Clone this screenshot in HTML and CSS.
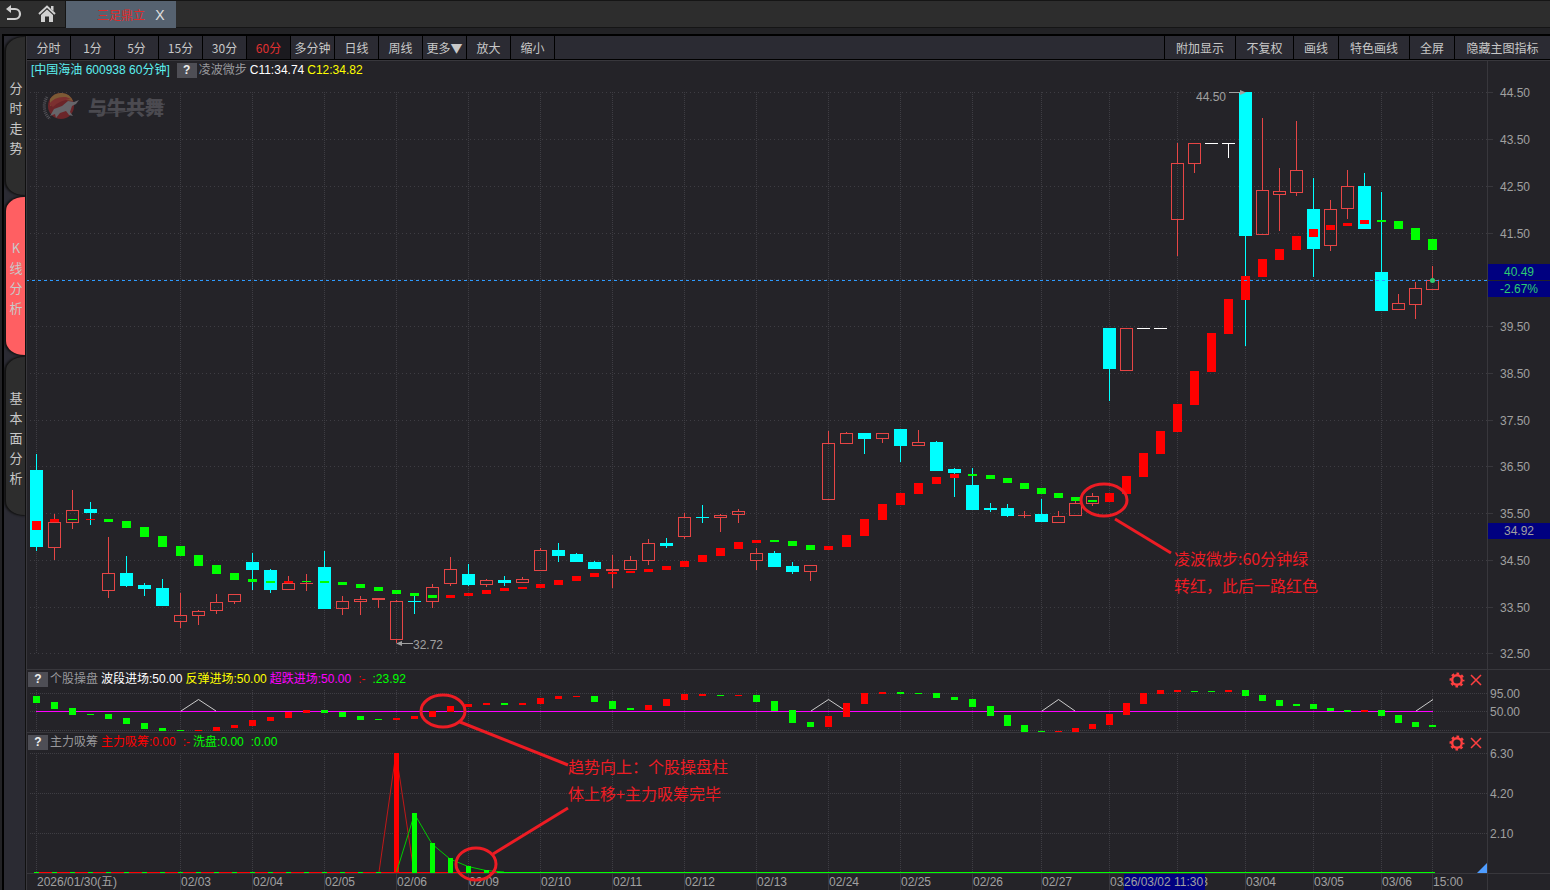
FILE: index.html
```html
<!DOCTYPE html>
<html lang="zh-CN">
<head>
    <meta charset="UTF-8">
    <meta name="viewport" content="width=device-width, initial-scale=1.0">
    <title>中国海油 600938 60分钟</title>
    <link rel="stylesheet" href="styles.css">
</head>
<body>
    <header class="topbar">
        <button class="top-icon" aria-label="返回">
            <svg width="16" height="18" viewBox="0 0 16 18"><path d="M3 4H9A4.500 4.500 0 0 1 9 14H1" fill="none" stroke="#d0d0d0" stroke-width="2.200"/><path d="M0 4L5 0V8Z" fill="#d0d0d0"/></svg>
        </button>
        <button class="top-icon" aria-label="首页">
            <svg width="18" height="18" viewBox="0 0 18 18"><path d="M1 9L9 1.500L17 9" fill="none" stroke="#d0d0d0" stroke-width="2"/><path d="M13 1H15.500V6L13 4Z" fill="#d0d0d0"/><path d="M3 10L9 4.500L15 10V17H11V11.500H7V17H3Z" fill="#d0d0d0"/></svg>
        </button>
        <div class="page-tab">
            <span class="page-name">三足鼎立</span>
            <button class="page-close" aria-label="关闭">X</button>
        </div>
    </header>

    <div class="frame">
        <nav class="sidebar">
            <button class="side-tab"><span>分时走势</span></button>
            <button class="side-tab active"><span>K线分析</span></button>
            <button class="side-tab"><span>基本面分析</span></button>
        </nav>

        <main class="content">
            <div class="toolbar">
                <div class="periods">
                    <button>分时</button>
                    <button>1分</button>
                    <button>5分</button>
                    <button>15分</button>
                    <button>30分</button>
                    <button class="active">60分</button>
                    <button>多分钟</button>
                    <button>日线</button>
                    <button>周线</button>
                    <button>更多▼</button>
                    <button>放大</button>
                    <button>缩小</button>
                </div>
                <div class="tools">
                    <button class="four">附加显示</button>
                    <button class="three">不复权</button>
                    <button class="two">画线</button>
                    <button class="four">特色画线</button>
                    <button class="two">全屏</button>
                    <button class="six">隐藏主图指标</button>
                </div>
            </div>

            <div class="charts">
                <section class="panel">
                    <svg id="kline" class="plot" viewBox="27 61 1523 608"></svg>
                    <div class="legend main-legend">
                        <span class="stock">[中国海油 600938 60分钟]</span>
                        <button class="help">?</button>
                        <span class="muted">凌波微步</span>
                        <span class="white">C11:34.74</span>
                        <span class="yellow">C12:34.82</span>
                    </div>
                </section>

                <section class="panel">
                    <svg id="osc" class="plot" viewBox="27 670 1523 62"></svg>
                    <div class="legend">
                        <button class="help">?</button>
                        <span class="muted">个股操盘</span>
                        <span class="white">波段进场:50.00</span>
                        <span class="yellow">反弹进场:50.00</span>
                        <span class="magenta">超跌进场:50.00</span>
                        <span class="red spaced">:-</span>
                        <span class="green spaced">:23.92</span>
                    </div>
                    <div class="panel-actions">
                        <button aria-label="设置"><svg width="16" height="16" viewBox="-8 -8 16 16"><use href="#gear"/></svg></button>
                        <button aria-label="关闭"><svg width="16" height="16" viewBox="-8 -8 16 16"><use href="#cross"/></svg></button>
                    </div>
                </section>

                <section class="panel">
                    <svg id="force" class="plot" viewBox="27 733 1523 140"></svg>
                    <div class="legend">
                        <button class="help">?</button>
                        <span class="muted">主力吸筹</span>
                        <span class="red">主力吸筹:0.00</span>
                        <span class="red spaced">:-</span>
                        <span class="green">洗盘:0.00</span>
                        <span class="green spaced">:0.00</span>
                    </div>
                    <div class="panel-actions">
                        <button aria-label="设置"><svg width="16" height="16" viewBox="-8 -8 16 16"><use href="#gear"/></svg></button>
                        <button aria-label="关闭"><svg width="16" height="16" viewBox="-8 -8 16 16"><use href="#cross"/></svg></button>
                    </div>
                </section>

                <section class="panel">
                    <svg id="dates" class="plot" viewBox="27 874 1523 16"></svg>
                </section>

                <!-- hand drawn notes over all panels -->
                <svg class="notes" viewBox="27 61 1523 829">
                    <defs>
                        <g id="gear" fill="none" stroke="#ff4040">
                            <circle r="4.800" stroke-width="2.400"/>
                            <circle r="6.400" stroke-width="2.200" stroke-dasharray="2.600 2.426" stroke-dashoffset="1.300"/>
                        </g>
                        <path id="cross" d="M-5 -5L5 5M5 -5L-5 5" fill="none" stroke="#ff4040" stroke-width="1.500"/>
                    </defs>
                    <g class="watermark">
                        <circle cx="61" cy="106" r="13" fill="#6b2529"/>
                        <path d="M50 99A13 13 0 0 1 73 101L60 99L50 106Z" fill="#7d5a35"/>
                        <path d="M49 104Q55 96 66 97L71 99Q60 100 53 107Z" fill="#7c3030"/>
                        <path d="M50 116L54 109L62 106L68 101L74 102L79 100L76 104L72 106L70 112L73 116L69 115L66 111L60 113L56 118L55 114Z" fill="#66656a"/>
                        <path d="M47 97A17 17 0 0 0 50 119" fill="none" stroke="#55545a" stroke-width="3" stroke-dasharray="1 1"/>
                        <text x="88" y="115">与牛共舞</text>
                        <path d="M98 113Q125 114 165 104" fill="none" stroke="#4b4a50"/>
                    </g>
                    <g class="pen">
                        <ellipse cx="1104" cy="500" rx="23" ry="16"/>
                        <path d="M1115 519L1171 553"/>
                        <ellipse cx="443" cy="711" rx="22" ry="16"/>
                        <path d="M460 722L568 765"/>
                        <ellipse cx="476" cy="864" rx="20" ry="16"/>
                        <path d="M493 854L568 808"/>
                    </g>
                    <g class="pen-text">
                        <text x="1174" y="565">凌波微步:60分钟绿</text>
                        <text x="1174" y="592">转红，此后一路红色</text>
                        <text x="568" y="773">趋势向上：个股操盘柱</text>
                        <text x="568" y="800">体上移+主力吸筹完毕</text>
                    </g>
                </svg>
            </div>
        </main>
    </div>

    <script src="chart.js"></script>
</body>
</html>
```
FILE: styles.css
```css
* {
    box-sizing: border-box;
}
body {
    margin: 0;
    background: #222225;
    color: #c8c8c8;
    font-family: "Liberation Sans", "Noto Sans CJK SC", sans-serif;
    font-size: 12px;
}
button {
    margin: 0;
    padding: 0;
    border: none;
    background: none;
    color: inherit;
    font: inherit;
    cursor: pointer;
}
svg {
    display: block;
}

/* top bar */
.topbar {
    display: flex;
    height: 28px;
    background: #2d2d2d;
    border-top: 1px solid #151515;
    border-bottom: 1px solid #151515;
}
.top-icon {
    display: flex;
    align-items: center;
    justify-content: center;
    width: 28px;
}
.top-icon + .top-icon {
    width: 38px;
    border-right: 1px solid #151515;
}
.page-tab {
    display: flex;
    align-items: center;
    justify-content: flex-end;
    gap: 8px;
    width: 110px;
    height: 27px;
    padding-right: 9px;
    background: #566270;
}
.page-name {
    color: #e02a2a;
}
.page-close {
    width: 14px;
    color: #e0e0e0;
    font-size: 14px;
}

/* frame */
.frame {
    display: flex;
    margin: 6px 0 0 2px;
    border-top: 2px solid #000;
    border-left: 2px solid #000;
    background: #2b2b33;
}
.sidebar {
    display: flex;
    flex-direction: column;
    gap: 2px;
    width: 22px;
    padding: 1px 0 0 2px;
    border-right: 1px solid #111;
}
.side-tab {
    height: 158px;
    padding-top: 4px;
    background: #2d2d2d;
    border-radius: 18px 0 0 18px / 14px;
    box-shadow: -1px 0 2px 1px #111;
    color: #c8c8c8;
    font-family: "Noto Sans CJK SC", sans-serif;
    font-size: 13px;
    line-height: 20px;
}
.side-tab.active {
    background: #ff5f62;
}
.side-tab span {
    display: block;
    width: 14px;
    margin-left: 3px;
    word-break: break-all;
    text-align: center;
}
.content {
    flex: 1;
    min-width: 0;
    background: #242328;
    border-left: 1px solid #38373c;
}

/* toolbar */
.toolbar {
    display: flex;
    justify-content: space-between;
    height: 24px;
    background: #2b2b33;
    border-bottom: 1px solid #000;
    font-family: "Noto Sans CJK SC", sans-serif;
}
.periods,
.tools {
    display: flex;
}
.periods button {
    width: 44px;
    border-right: 1px solid #000;
    white-space: nowrap;
}
.periods .active {
    background: #1b1a1f;
    color: #e03030;
}
.tools button {
    border-left: 1px solid #000;
}
.tools .two {
    width: 45px;
}
.tools .three {
    width: 58px;
}
.tools .four {
    width: 71px;
}
.tools .six {
    width: 96px;
}

/* charts */
.charts {
    position: relative;
}
.panel {
    position: relative;
    border-top: 1px solid #38373c;
}
.plot {
    width: 100%;
}
.legend {
    position: absolute;
    top: 1px;
    left: 1px;
    display: flex;
    align-items: center;
    gap: 3px;
    height: 16px;
    line-height: 16px;
    white-space: nowrap;
}
.main-legend {
    left: 4px;
}
.main-legend .help {
    margin-left: 4px;
}
.help {
    width: 20px;
    height: 15px;
    margin-right: -1px;
    background: #4e4e55;
    color: #eee;
    font-weight: bold;
    line-height: 15px;
}
.spaced {
    margin-left: 4px;
}
.stock {
    color: #5cf0f0;
}
.muted {
    color: #98989c;
}
.white {
    color: #fff;
}
.yellow {
    color: #ff0;
}
.magenta {
    color: #f0f;
}
.red {
    color: #f00;
}
.green {
    color: #0f0;
}
.panel-actions {
    position: absolute;
    top: 2px;
    right: 66px;
    display: flex;
    gap: 3px;
}
.notes {
    position: absolute;
    top: 1px;
    left: 0;
    width: 100%;
    pointer-events: none;
}
.watermark text {
    fill: #4b4a50;
    font-family: "Noto Sans CJK SC", sans-serif;
    font-size: 19px;
    font-weight: 900;
}
.pen {
    fill: none;
    stroke: #ed1c24;
    stroke-width: 3;
}
.pen-text {
    fill: #ed1c24;
    font-family: "Noto Sans CJK SC", sans-serif;
    font-size: 16px;
}

/* chart parts */
.plot text {
    fill: #a0a0a0;
    font-size: 12px;
}
.plot .up-text {
    fill: #2ecc71;
}
.mid {
    text-anchor: middle;
}
```
FILE: chart.js
```js
const NS = "http://www.w3.org/2000/svg";
const GRID = "#3e3d43";
const EDGE = "#38373c";
const AXIS_X = 1487;

// kind (r = up, c = down, w = flat), high, low, body top, body bottom
const candles = `c 454 551 470 547,r 514 560 522 548,r 490 529 510 523,c 502 525 509 513,r 537 598 573 591,c 556 587 573 586,c 583 596 585 589,c 579 606 588 606,
r 593 628 615 622,r 610 625 611 616,r 594 614 602 611,r 594 604 594 602,c 553 590 562 570,c 569 593 570 590,r 576 590 583 590,r 574 591 583 584,
c 551 609 567 609,r 596 615 601 609,r 596 615 599 602,r 598 608 598 600,r 600 643 601 640,c 595 614 601 602,r 584 608 587 602,r 557 586 569 584,
c 564 586 574 585,r 579 587 580 585,c 576 586 580 583,r 577 583 579 583,r 548 571 550 571,c 543 562 550 556,c 553 562 554 562,c 561 569 562 569,
r 555 588 569 571,r 556 570 560 570,r 539 565 543 561,c 538 548 543 546,r 513 539 517 537,c 505 523 517 518,r 514 532 515 518,r 509 523 511 515,
r 548 570 553 561,c 551 567 553 567,c 562 574 566 572,r 565 581 565 572,r 431 500 443 500,r 432 444 433 444,c 433 454 433 439,r 433 443 433 439,
c 429 462 429 446,r 430 446 442 446,c 441 471 442 471,c 468 497 469 473,c 468 510 485 510,c 503 512 508 510,c 504 517 508 516,r 511 518 515 516,
c 499 522 514 522,r 511 523 516 523,r 501 516 503 516,r 493 506 496 504,c 328 401 328 369,r 328 371 328 371,w 328 329 328 329,w 328 329 328 329,
r 143 256 163 220,r 143 173 143 164,w 143 144 143 144,w 143 158 143 144,c 92 346 92 236,r 118 235 190 235,r 168 231 191 195,r 121 196 170 193,
c 178 277 209 249,r 200 251 209 246,r 170 219 186 209,c 173 229 186 229,c 192 311 272 311,r 294 310 303 310,r 282 319 288 305,r 266 290 280 290`;

// colour, top, bottom
const trend = `r 521 530,r 519 522,g 519 520,r 519 520,g 519 522,g 521 528,g 527 537,g 536 547,g 546 556,g 555 566,g 565 574,g 573 580,g 579 582,g 581 583,r 581 583,g 581 582,
g 581 583,g 582 585,g 584 588,g 587 591,g 590 594,g 593 596,g 595 598,r 595 598,r 593 596,r 590 594,r 588 591,r 587 589,r 584 588,r 580 585,r 576 581,r 573 577,
r 572 574,r 571 573,r 569 572,r 566 570,r 561 567,r 555 562,r 548 556,r 542 549,r 540 543,g 540 542,g 541 546,g 545 550,r 546 550,r 535 547,r 519 536,r 504 520,
r 493 505,r 483 494,r 477 484,r 474 478,g 474 476,g 475 479,g 478 483,g 483 489,g 488 494,g 493 498,g 497 501,g 500 502,r 493 502,r 476 494,r 453 477,r 431 454,
r 404 432,r 371 405,r 333 372,r 299 334,r 276 300,r 259 277,r 249 260,r 236 250,r 229 237,r 225 230,r 223 226,r 220 224,g 220 222,g 221 229,g 228 240,g 239 250`;

const oscillator = `g 696 703,g 702 709,g 708 715,g 714 715,g 714 719,g 718 724,g 723 729,g 728 731,g 730 731,r 730 731,r 727 731,r 725 728,r 720 726,r 717 721,r 712 718,r 710 713,
g 710 713,g 712 717,g 716 720,g 719 720,r 718 720,r 716 719,r 711 717,r 706 712,r 704 707,r 703 705,g 703 705,r 703 705,r 698 704,r 696 699,r 696 697,g 696 702,
g 701 709,g 708 710,r 705 710,r 699 706,r 694 700,r 694 696,g 695 696,r 695 696,g 695 702,g 701 711,g 710 723,g 722 727,r 716 727,r 703 717,r 693 704,r 692 694,
g 692 694,g 693 694,g 693 698,g 697 700,g 699 707,g 706 716,g 715 726,g 725 732,g 731 732,r 731 732,r 728 732,r 724 729,r 714 725,r 703 715,r 693 704,r 690 694,
r 690 692,g 691 692,g 691 692,r 690 692,g 690 696,g 695 701,g 700 706,g 704 706,g 704 709,g 708 711,g 710 712,r 710 712,g 710 716,g 715 723,g 722 727,g 725 727`;

const days = [
    [180, "02/03"], [252, "02/04"], [324, "02/05"], [396, "02/06"], [468, "02/09"], [540, "02/10"],
    [612, "02/11"], [684, "02/12"], [756, "02/13"], [828, "02/24"], [900, "02/25"], [972, "02/26"],
    [1041, "02/27"], [1109, "03/02"], [1177, "03/03"], [1245, "03/04"], [1313, "03/05"], [1381, "03/06"], [1432, "15:00"]
];

const colors = { r: "#f00", g: "#0f0" };
const candleColors = { r: "#e64545", c: "#0ff", w: "#fff" };

function parse(text) {
    return text.split(",").map(row => {
        const [kind, ...nums] = row.trim().split(" ");
        return [kind, ...nums.map(Number)];
    });
}

// bars get one pixel closer after the 54th
function barX(i) {
    return i <= 53 ? 36 + 18 * i : 990 + 17 * (i - 53);
}

function add(svg, name, attrs, text) {
    const el = document.createElementNS(NS, name);
    for (const key in attrs) el.setAttribute(key, attrs[key]);
    if (text) el.textContent = text;
    svg.appendChild(el);
    return el;
}

function box(svg, x, y, width, height, fill) {
    add(svg, "rect", { x, y, width, height, fill, "shape-rendering": "crispEdges" });
}

function path(svg, d, stroke, dash) {
    add(svg, "path", { d, stroke, fill: "none", "stroke-dasharray": dash || "none" });
}

function grid(svg, rows, top, bottom, dash) {
    rows.forEach(y => path(svg, `M30 ${y + 0.5}H${AXIS_X}`, GRID, dash));
    [36, ...days.map(d => d[0])].forEach(x => path(svg, `M${x + 0.5} ${top}V${bottom}`, GRID, "1 1"));
}

function bars(svg, data, half) {
    parse(data).forEach(([kind, top, bottom], i) => {
        box(svg, barX(i) - half, top, half * 2 + 1, bottom - top, colors[kind]);
    });
}

function drawKline() {
    const svg = document.getElementById("kline");
    const rows = [92, 139, 186, 233, 279, 326, 373, 420, 466, 513, 560, 607, 653];
    grid(svg, rows, 92, 653, "1 3");
    box(svg, AXIS_X, 61, 1, 608, EDGE);
    rows.forEach((y, i) => {
        box(svg, AXIS_X, y, 6, 1, EDGE);
        if (i !== 4) add(svg, "text", { x: 1500, y: y + 5 }, (44.5 - i).toFixed(2));
    });

    parse(candles).forEach(([kind, high, low, top, bottom], i) => {
        const x = barX(i);
        const color = candleColors[kind];
        box(svg, x, high, 1, top - high, color);
        box(svg, x, bottom, 1, low - bottom, color);
        if (kind === "r" && bottom - top > 2) {
            add(svg, "rect", { x: x - 5.5, y: top + 0.5, width: 12, height: bottom - top - 1, fill: "none", stroke: color });
        } else {
            box(svg, x - 6, top, 13, bottom - top, color);
        }
    });
    bars(svg, trend, 4);

    // highest and lowest price
    add(svg, "text", { x: 1196, y: 101 }, "44.50");
    box(svg, 1229, 92, 14, 1, "#a0a0a0");
    add(svg, "path", { d: "M1240 90L1246 92.5L1240 95Z", fill: "#a0a0a0" });
    add(svg, "text", { x: 413, y: 649 }, "32.72");
    box(svg, 399, 643, 14, 1, "#a0a0a0");
    add(svg, "path", { d: "M402 641L396 643.5L402 646Z", fill: "#a0a0a0" });

    // last price
    path(svg, `M26 280.5H${AXIS_X}`, "#2e9bff", "3 3");
    add(svg, "circle", { cx: 1432.5, cy: 280.5, r: 2.5, fill: "#2ecc71" });
    box(svg, 1488, 264, 62, 16, "#000080");
    box(svg, 1488, 281, 62, 16, "#000080");
    box(svg, 1488, 523, 62, 16, "#000080");
    add(svg, "text", { x: 1519, y: 276, class: "mid up-text" }, "40.49");
    add(svg, "text", { x: 1519, y: 293, class: "mid up-text" }, "-2.67%");
    add(svg, "text", { x: 1519, y: 535, class: "mid" }, "34.92");
}

function drawOscillator() {
    const svg = document.getElementById("osc");
    grid(svg, [693, 711, 730], 690, 731, "1 1");
    box(svg, AXIS_X, 670, 1, 62, EDGE);
    add(svg, "text", { x: 1490, y: 698 }, "95.00");
    add(svg, "text", { x: 1490, y: 716 }, "50.00");
    box(svg, 36, 711, 1397, 1, "#f0f");
    path(svg, "M181 711L198.500 699.500L216 711M811 711L828.500 699.500L846 711M1042 711L1058.500 699.500L1075 711M1416 711L1433 699.500", "#ccc");
    bars(svg, oscillator, 3);
}

function drawForce() {
    const svg = document.getElementById("force");
    grid(svg, [753, 793, 833], 753, 873, "1 1");
    box(svg, AXIS_X, 733, 1, 140, EDGE);
    add(svg, "text", { x: 1490, y: 758 }, "6.30");
    add(svg, "text", { x: 1490, y: 798 }, "4.20");
    add(svg, "text", { x: 1490, y: 838 }, "2.10");

    box(svg, 34, 872, 463, 1, "#f00");
    path(svg, "M379 872L396 753L414 872", "#c01818");
    box(svg, 394, 753, 5, 120, "#f00");
    path(svg, "M396.500 872L414.500 814L432 844L450 859L468 866.500L486 870.500L504 872", "#0c0");
    [813, 843, 858, 866, 870].forEach((top, i) => box(svg, barX(21 + i) - 2, top, 5, 873 - top, "#0f0"));
    for (let i = 0; i < 20; i++) box(svg, barX(i) - 2, 872, 5, 1, "#0f0");
    box(svg, 497, 872, 938, 1, "#0f0");
    add(svg, "path", { d: "M1477 873L1487 863V873Z", fill: "#4f9dff" });
}

function drawDates() {
    const svg = document.getElementById("dates");
    box(svg, AXIS_X, 874, 1, 16, EDGE);
    add(svg, "text", { x: 37, y: 886 }, "2026/01/30(五)");
    days.forEach(([x, label]) => {
        box(svg, x, 874, 1, 16, EDGE);
        add(svg, "text", { x: x + 1, y: 886 }, label);
    });
    // cursor time
    box(svg, 1124, 874, 81, 16, "#000080");
    add(svg, "text", { x: 1124, y: 886 }, "26/03/02 11:30");
}

drawKline();
drawOscillator();
drawForce();
drawDates();
```
